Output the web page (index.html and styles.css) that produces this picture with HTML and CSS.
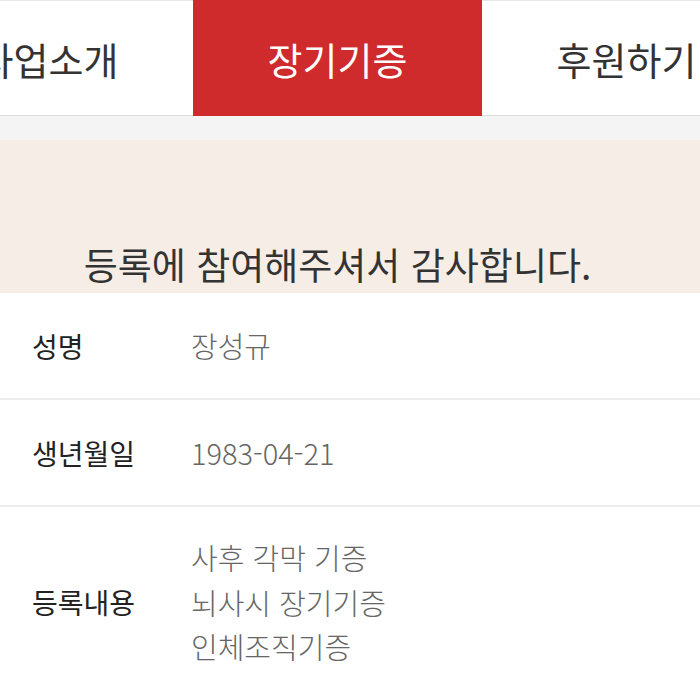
FILE: index.html
```html
<!DOCTYPE html>
<html lang="ko">
<head>
<meta charset="UTF-8" />
<meta name="viewport" content="width=device-width, initial-scale=1.0" />
<title>장기기증 등록 완료</title>
<link rel="stylesheet" href="styles.css">
</head>
<body>

<nav class="tabs">
  <a class="tab" href="#">사업소개</a>
  <a class="tab active" href="#">장기기증</a>
  <a class="tab" href="#">후원하기</a>
</nav>

<div class="gap-band"></div>

<div class="thanks">
  <h1>등록에 참여해주셔서 감사합니다.</h1>
</div>

<div class="info">
  <div class="row">
    <div class="label">성명</div>
    <div class="value">장성규</div>
  </div>
  <div class="row">
    <div class="label">생년월일</div>
    <div class="value">1983-04-21</div>
  </div>
  <div class="row row-multi">
    <div class="label">등록내용</div>
    <div class="value">
      <div>사후 각막 기증</div>
      <div>뇌사시 장기기증</div>
      <div>인체조직기증</div>
    </div>
  </div>
</div>

</body>
</html>
```

FILE: styles.css
```css
body { margin: 0; font-family: "Noto Sans CJK KR", "Noto Sans", sans-serif; background-color: #fff; color: #222; overflow: hidden; }

.tabs { display: flex; margin-left: -96px; width: 867px; height: 116px; border-top: 1px solid #e6e6e6; border-bottom: 1px solid #dcdcdc; box-sizing: border-box; background-color: #fff; }
.tab { flex: 0 0 289px; display: flex; align-items: center; justify-content: center; font-size: 38px; color: #333; text-decoration: none; }
.tab.active { background-color: #cf2a2c; color: #fff; margin-top: -1px; margin-bottom: -1px; }

.gap-band { height: 24px; background-color: #f4f4f4; }

.thanks { background-color: #f6eee6; height: 153px; display: flex; align-items: flex-end; justify-content: center; padding-right: 25px; }
.thanks h1 { margin: 0 0 2px; font-size: 37px; font-weight: 400; color: #333; }

.row { display: flex; align-items: center; height: 107px; border-bottom: 2px solid #ececec; box-sizing: border-box; padding-left: 32px; }
.row-multi { height: 190px; border-bottom: none; }
.label { width: 159px; font-size: 28px; font-weight: 400; color: #222; }
.value { font-size: 29px; font-weight: 300; color: #666; line-height: 44.5px; }
```
